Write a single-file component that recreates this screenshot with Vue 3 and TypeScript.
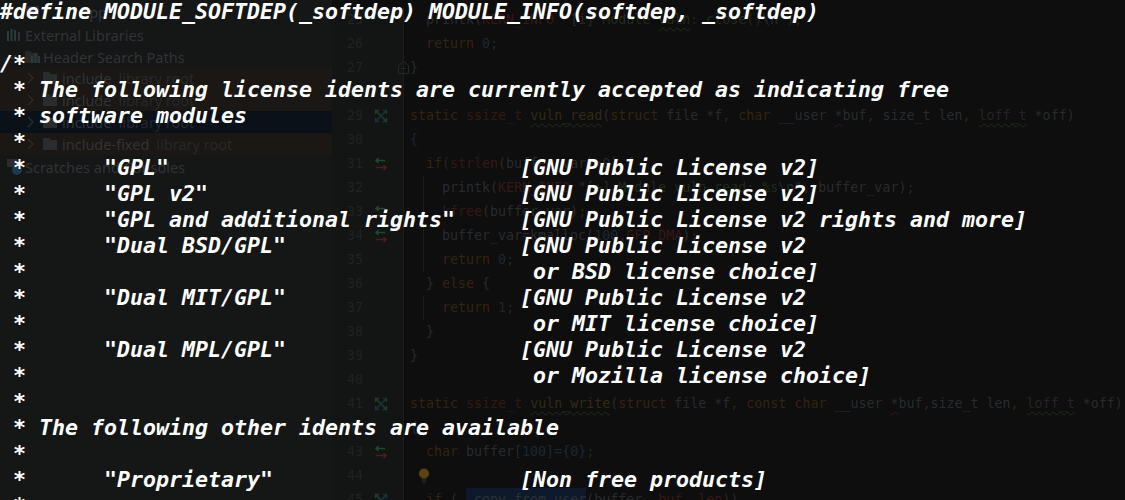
<script setup lang="ts">
type Seg = { t: string; c?: string };
type Line = { n: number; icon?: 'impl' | 'swap'; fold?: boolean; guide?: boolean; bulb?: boolean; segs: Seg[] };

const lines: Line[] = [
  { n: 25, segs: [{ t: '  printk(' }, { t: 'KERN_INFO', c: 'ty' }, { t: ' ' }, { t: '"[i] Module ', c: 'st' }, { t: 'vuln', c: 'st sq' }, { t: ': close()', c: 'st' }, { t: '\\n', c: 'es' }, { t: '"', c: 'st' }, { t: ');', c: 'kw' }] },
  { n: 26, segs: [{ t: '  ' }, { t: 'return', c: 'kw' }, { t: ' ' }, { t: '0', c: 'nu' }, { t: ';', c: 'kw' }] },
  { n: 27, fold: true, segs: [{ t: '}' }] },
  { n: 28, segs: [] },
  { n: 29, icon: 'impl', segs: [{ t: 'static', c: 'kw' }, { t: ' ' }, { t: 'ssize_t', c: 'ty' }, { t: ' ' }, { t: 'vuln_read', c: 'fn sq' }, { t: '(' }, { t: 'struct', c: 'kw' }, { t: ' file *f' }, { t: ',', c: 'kw' }, { t: ' ' }, { t: 'char', c: 'kw' }, { t: ' __user ' }, { t: '*', c: 'sr' }, { t: 'buf' }, { t: ',', c: 'kw' }, { t: ' size_t len' }, { t: ',', c: 'kw' }, { t: ' ' }, { t: 'loff_t', c: 'dm sq' }, { t: ' *off)' }] },
  { n: 30, segs: [{ t: '{', c: 'nu' }] },
  { n: 31, icon: 'swap', segs: [{ t: '  ' }, { t: 'if', c: 'kw' }, { t: '(', c: 'nu' }, { t: 'strlen', c: 'ty' }, { t: '(buffer_var)>0) {' }] },
  { n: 32, guide: true, segs: [{ t: '    printk(' }, { t: 'KERN_INFO', c: 'ty' }, { t: ' ' }, { t: '"[+] Module vuln read: %s', c: 'st' }, { t: '\\n', c: 'es' }, { t: '"', c: 'st' }, { t: ',', c: 'kw' }, { t: ' buffer_var)' }, { t: ';', c: 'kw' }] },
  { n: 33, icon: 'swap', guide: true, segs: [{ t: '    ' }, { t: 'kfree', c: 'ty' }, { t: '(buffer_var)' }, { t: ';', c: 'kw' }] },
  { n: 34, icon: 'swap', guide: true, segs: [{ t: '    buffer_var=kmalloc(' }, { t: '100', c: 'nu' }, { t: ',', c: 'kw' }, { t: 'GFP_DMA', c: 'ty' }, { t: ')' }, { t: ';', c: 'kw' }] },
  { n: 35, guide: true, segs: [{ t: '    ' }, { t: 'return', c: 'kw' }, { t: ' ' }, { t: '0', c: 'nu' }, { t: ';', c: 'kw' }] },
  { n: 36, segs: [{ t: '  } ' }, { t: 'else', c: 'kw' }, { t: ' {' }] },
  { n: 37, guide: true, segs: [{ t: '    ' }, { t: 'return', c: 'kw' }, { t: ' ' }, { t: '1', c: 'nu' }, { t: ';', c: 'kw' }] },
  { n: 38, segs: [{ t: '  }' }] },
  { n: 39, segs: [{ t: '}' }] },
  { n: 40, segs: [] },
  { n: 41, icon: 'impl', segs: [{ t: 'static', c: 'kw' }, { t: ' ' }, { t: 'ssize_t', c: 'ty' }, { t: ' ' }, { t: 'vuln_write', c: 'fn sq' }, { t: '(' }, { t: 'struct', c: 'kw' }, { t: ' file *f' }, { t: ',', c: 'kw' }, { t: ' ' }, { t: 'const', c: 'kw' }, { t: ' ' }, { t: 'char', c: 'kw' }, { t: ' __user ' }, { t: '*', c: 'sr' }, { t: 'buf' }, { t: ',', c: 'kw' }, { t: 'size_t len' }, { t: ',', c: 'kw' }, { t: ' ' }, { t: 'loff_t', c: 'dm sq' }, { t: ' *off)' }] },
  { n: 42, segs: [{ t: '{', c: 'nu' }] },
  { n: 43, icon: 'swap', segs: [{ t: '  ' }, { t: 'char', c: 'kw' }, { t: ' buffer' }, { t: '[100]={0}', c: 'nu' }, { t: ';', c: 'kw' }] },
  { n: 44, bulb: true, segs: [] },
  { n: 45, icon: 'impl', segs: [{ t: '  ' }, { t: 'if', c: 'kw' }, { t: ' ( ' }, { t: '_copy_from_user', c: 'hl' }, { t: '(buffer, ' }, { t: 'buf', c: 'ty' }, { t: ', ' }, { t: 'len', c: 'ty' }, { t: '))' }] },
];

const roots = [
  { name: 'include', cls: 'warm' },
  { name: 'include', cls: 'warm' },
  { name: 'include', cls: 'sel' },
  { name: 'include-fixed', cls: 'warm' },
];

const overlay = [
  '#define MODULE_SOFTDEP(_softdep) MODULE_INFO(softdep, _softdep)',
  '',
  '/*',
  ' * The following license idents are currently accepted as indicating free',
  ' * software modules',
  ' *',
  ' *      "GPL"                           [GNU Public License v2]',
  ' *      "GPL v2"                        [GNU Public License v2]',
  ' *      "GPL and additional rights"     [GNU Public License v2 rights and more]',
  ' *      "Dual BSD/GPL"                  [GNU Public License v2',
  ' *                                       or BSD license choice]',
  ' *      "Dual MIT/GPL"                  [GNU Public License v2',
  ' *                                       or MIT license choice]',
  ' *      "Dual MPL/GPL"                  [GNU Public License v2',
  ' *                                       or Mozilla license choice]',
  ' *',
  ' * The following other idents are available',
  ' *',
  ' *      "Proprietary"                   [Non free products]',
  ' *',
].join('\n');
</script>

<template>
  <div class="screen">
    <div class="ide">
      <aside class="tree">
        <div class="row r-app">
          <svg class="ico" width="15" height="15" viewBox="0 0 15 15"><rect x="1" y="2" width="13" height="11" fill="#2a2338" /></svg>
          <span class="label app">app</span>
        </div>
        <div class="row r-ext">
          <svg class="ico" width="14" height="12" viewBox="0 0 14 12"><g stroke-width="2"><path d="M1 2v10" stroke="#2f3a3e" /><path d="M4.500 0v12" stroke="#27402f" /><path d="M8 1v11" stroke="#273a44" /><path d="M12 3v9" stroke="#2f3336" /></g></svg>
          <span class="label">External Libraries</span>
        </div>
        <div class="row r-head">
          <svg class="chev" width="10" height="10" viewBox="0 0 10 10"><path d="M1 3l4 4 4-4" fill="none" stroke="#2b2d2f" stroke-width="1.200" /></svg>
          <svg class="ico" width="16" height="14" viewBox="0 0 16 14"><path d="M0 1h5l2 2h6v10H0z" fill="#26282a" /><path d="M7 6v7" stroke="#2f3a3e" stroke-width="2" /><path d="M10.500 3v10" stroke="#27402f" stroke-width="2" /><path d="M14 6v7" stroke="#273a44" stroke-width="2" /></svg>
          <span class="label">Header Search Paths</span>
        </div>
        <div v-for="(r, i) in roots" :key="i" class="row r-root" :class="r.cls">
          <svg class="chev side" width="10" height="12" viewBox="0 0 10 12"><path d="M2 1l5 5-5 5" fill="none" stroke="#2b2d2f" stroke-width="1.200" /></svg>
          <svg class="ico" width="15" height="12" viewBox="0 0 15 12"><path d="M0 0h6l2 2h6v10H0z" fill="#2a2c2e" /></svg>
          <span class="label">{{ r.name }}</span>
          <span class="label muted">library root</span>
        </div>
        <div class="row r-scr">
          <svg class="ico" width="16" height="16" viewBox="0 0 16 16"><rect x="0" y="0" width="10" height="8" fill="#2a2c2e" /><circle cx="10" cy="11" r="5" fill="#1c3a4c" /></svg>
          <span class="label">Scratches and Consoles</span>
        </div>
      </aside>

      <main class="code">
        <div v-for="l in lines" :key="l.n" class="line">
          <span class="num">{{ l.n }}</span>
          <span class="mark">
            <svg v-if="l.icon === 'impl'" width="14" height="14" viewBox="0 0 14 14" fill="none" stroke-width="1.500"><path d="M1.500 5V1.500H5M1.500 1.500L7 7l5.500 5.500M12.500 9v3.500H9" stroke="#1a4028" /><path d="M9 1.500h3.500V5M12.500 1.500L7 7l-5.500 5.500M1.500 9v3.500H5" stroke="#153242" /></svg>
            <svg v-if="l.icon === 'swap'" width="14" height="14" viewBox="0 0 14 14" fill="none" stroke-width="1.500"><path d="M11 3.500H2M4.500 1L2 3.500 4.500 6" stroke="#1f4a2a" /><path d="M2 10.500h10M9.500 8l2.500 2.500L9.500 13" stroke="#4c1f1c" /></svg>
          </span>
          <span class="src" :class="{ guide: l.guide }">
            <svg v-if="l.fold" class="fold" width="11" height="13" viewBox="0 0 11 13" fill="none" stroke="#25282a"><path d="M.5 12.500v-8l5-4 5 4v8zM3 7.500h5" /></svg>
            <svg v-if="l.bulb" class="bulb" width="12" height="16" viewBox="0 0 12 16"><circle cx="6" cy="5.500" r="5" fill="#5c4312" /><path d="M3.500 10h5v1.500h-5zM3.500 12.500h5v1h-5zM4.500 14.500h3v1h-3z" fill="#2f2c22" /></svg>
            <span v-for="(s, i) in l.segs" :key="i" :class="s.c">{{ s.t }}</span>
          </span>
        </div>
      </main>
    </div>
    <pre class="term">{{ overlay }}</pre>
  </div>
</template>

<style>
html, body { margin: 0; background: #0e0e0e; overflow: hidden; }
</style>

<style scoped>
.screen { position: relative; width: 1125px; height: 500px; overflow: hidden; }
.ide { display: grid; grid-template-columns: 332px 1fr; height: 500px; overflow: hidden; }

.tree { background: #151616; display: flex; flex-direction: column; font-family: "Noto Sans", sans-serif; font-size: 14.500px; color: #303437; }
.row { display: flex; align-items: center; flex: none; }
.r-app { height: 23px; padding-left: 25px; }
.r-ext { height: 23px; padding-left: 7px; }
.r-head { height: 21px; padding-left: 7px; }
.r-root { height: 22px; padding-left: 26px; }
.r-scr { height: 24px; padding-left: 7px; }
.warm { background: #1a1714; }
.sel { background: #0a1119; }
.chev { flex: none; margin-right: 8px; }
.r-root .chev { margin-right: 7px; }
.ico { flex: none; margin-right: 4px; }
.r-scr .ico { margin-right: 2px; }
.r-head .ico { margin-right: 2px; }
.app { margin-left: 37px; }
.label { white-space: nowrap; }
.muted { margin-left: 7px; color: #27282a; }

.code { background: #0e0e0e; padding-top: 8px; display: flex; flex-direction: column; font-family: "DejaVu Sans Mono", monospace; font-size: 13.300px; color: #282b2d; }
.line { display: flex; height: 24px; line-height: 24px; flex: none; white-space: pre; }
.num { width: 31px; flex: none; text-align: right; color: #202224; background: #131414; }
.mark { width: 41px; flex: none; display: flex; align-items: center; padding-left: 11px; box-sizing: border-box; background: #131414; border-right: 1px solid #1b1c1c; }
.src { position: relative; flex: 1; padding-left: 6px; }
.guide { background: linear-gradient(#1a1b1b, #1a1b1b) 19px 0 / 1px 100% no-repeat; }
.fold { position: absolute; left: -6px; top: 5px; }
.bulb { position: absolute; left: 14px; top: 4px; }

.kw { color: #33230f; }
.ty { color: #361816; }
.fn { color: #332a14; }
.st { color: #202b1c; }
.es { color: #1c2b33; }
.nu { color: #1a2834; }
.dm { color: #232527; }
.sq { text-decoration: underline wavy #1a2e18 1px; text-underline-offset: 3px; }
.sr { text-decoration: underline wavy #3a1510 1px; text-underline-offset: 3px; }
.hl { display: inline-block; height: 24px; background: #0e1a2c; color: #2c2f33; }

.term { position: absolute; left: 0; top: -1px; margin: 0; font-family: "DejaVu Sans Mono", monospace; font-weight: 700; font-style: italic; font-size: 21.600px; line-height: 26px; color: #fff; white-space: pre; }
</style>
